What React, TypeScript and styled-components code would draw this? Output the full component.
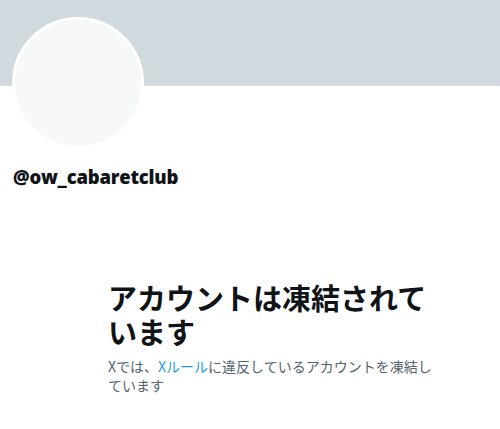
import React from 'react'
import styled, { createGlobalStyle } from 'styled-components'

const GlobalStyle = createGlobalStyle`
  html, body {
    margin: 0;
    padding: 0;
    background: #ffffff;
  }
  body {
    font-family: "Noto Sans CJK JP", "Noto Sans", sans-serif;
  }
`

const Page = styled.div`
  width: 500px;
  min-height: 429px;
  display: flex;
  flex-direction: column;
  background: #ffffff;
`

const Banner = styled.div`
  height: 86px;
  background: #cfd9de;
  box-shadow: inset 0 -3px 0 #d6dee2;
`

const ProfileHead = styled.div`
  display: flex;
  flex-direction: column;
  padding-left: 12px;
`

const Avatar = styled.div`
  width: 126px;
  height: 126px;
  margin-top: -69px;
  border-radius: 50%;
  border: 3px solid #ffffff;
  background: #f7f9f9;
`

const Handle = styled.div`
  margin-top: 16px;
  padding-left: 1px;
  font-family: "Open Sans", "Noto Sans", sans-serif;
  font-weight: 800;
  font-size: 18.5px;
  line-height: 24px;
  color: #0f1419;
  letter-spacing: -0.2px;
`

const EmptyState = styled.div`
  display: flex;
  flex-direction: column;
  gap: 9px;
  margin-top: 91px;
  padding-left: 108px;
  max-width: 336px;
`

const Title = styled.h1`
  margin: 0;
  font-family: "Noto Sans CJK JP", sans-serif;
  font-weight: 700;
  font-size: 29px;
  line-height: 34px;
  color: #0f1419;
`

const Body = styled.p`
  margin: 0;
  font-family: "Noto Sans CJK JP", sans-serif;
  font-size: 14px;
  line-height: 19px;
  color: #536471;
`

const RuleLink = styled.a`
  color: #1d9bf0;
  text-decoration: none;
`

export default function App() {
  return (
    <Page>
      <GlobalStyle />
      <Banner />
      <ProfileHead>
        <Avatar />
        <Handle>@ow_cabaretclub</Handle>
      </ProfileHead>
      <EmptyState>
        <Title>アカウントは凍結されています</Title>
        <Body>
          Xでは、<RuleLink href="#">Xルール</RuleLink>に違反しているアカウントを凍結しています
        </Body>
      </EmptyState>
    </Page>
  )
}
